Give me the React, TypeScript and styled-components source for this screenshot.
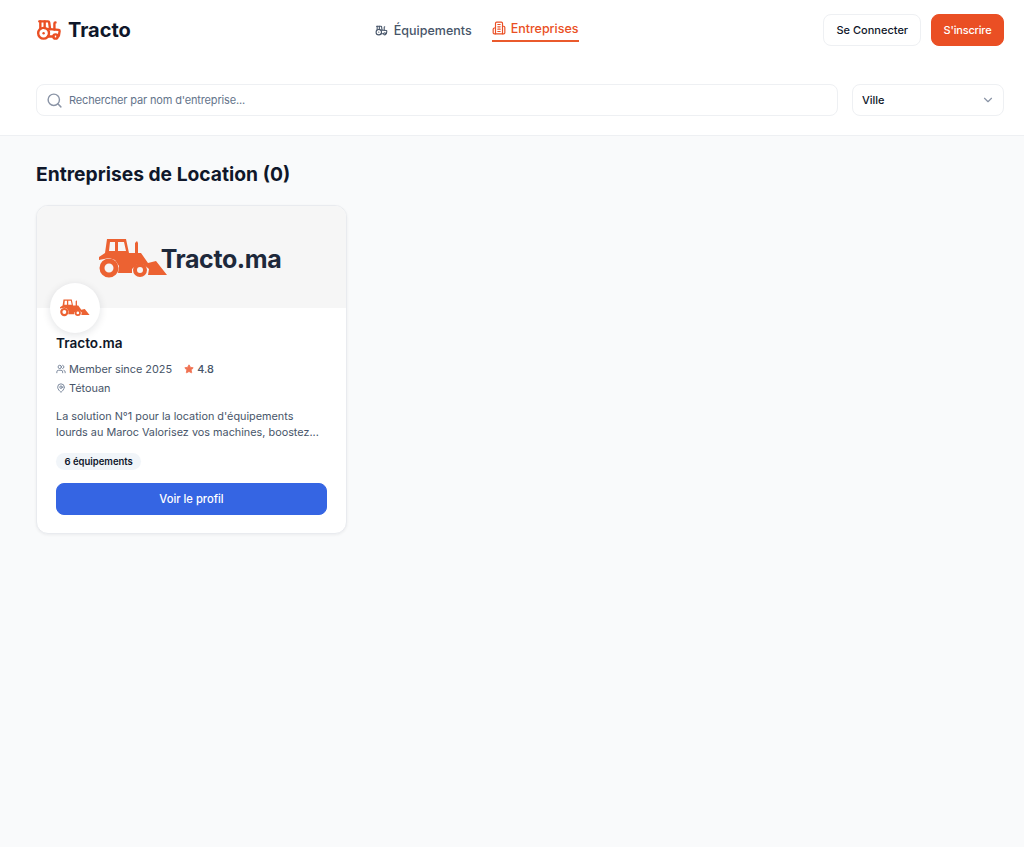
import { FC } from "react";
import styled, { createGlobalStyle } from "styled-components";
import { ChevronDown, MapPin, Search, Star, Tractor, Users } from "lucide-react";

const GlobalStyle = createGlobalStyle`
  html, body {
    margin: 0;
    padding: 0;
    background: #f9fafb;
    font-family: "Inter", "Liberation Sans", sans-serif;
    color: #0f172a;
  }
  * { box-sizing: border-box; }
`;

const Page = styled.div`
  min-height: 847px;
  background: #f9fafb;
`;

const TopArea = styled.header`
  background: #fff;
  border-bottom: 1px solid #eef0f3;
  height: 136px;
  padding: 14px 20px 0 36px;
`;

const NavRow = styled.div`
  display: flex;
  justify-content: space-between;
  align-items: center;
  height: 32px;
`;

const Brand = styled.div`
  display: flex;
  align-items: center;
  gap: 6px;
  font-size: 20px;
  font-weight: 700;
  color: #0f172a;
  svg { color: #ea4f24; }
`;

const Nav = styled.nav`
  display: flex;
  gap: 20px;
  margin-left: -1px;
`;

const NavItem = styled.a<{ $active?: boolean }>`
  display: flex;
  align-items: center;
  gap: ${(p) => (p.$active ? "5px" : "6px")};
  height: 27px;
  margin-top: ${(p) => (p.$active ? "0" : "3px")};
  padding-top: ${(p) => (p.$active ? "1px" : "0")};
  font-size: 12.5px;
  font-weight: 500;
  color: ${(p) => (p.$active ? "#ea4f24" : "#475569")};
  border-bottom: 2px solid ${(p) => (p.$active ? "#ea5a2c" : "transparent")};
`;

const Actions = styled.div`
  display: flex;
  gap: 10px;
`;

const HeaderButton = styled.button<{ $primary?: boolean }>`
  height: 32px;
  padding: 0 ${(p) => (p.$primary ? "11.5px" : "12px")};
  border-radius: 8px;
  border: 1px solid ${(p) => (p.$primary ? "#ea4f24" : "#eef0f3")};
  background: ${(p) => (p.$primary ? "#ea4f24" : "#fff")};
  color: ${(p) => (p.$primary ? "#fff" : "#0f172a")};
  font: 500 11px "Inter", sans-serif;
  letter-spacing: ${(p) => (p.$primary ? "-0.2px" : "0")};
`;

const FilterRow = styled.div`
  display: flex;
  gap: 14px;
  margin-top: 38px;
`;

const SearchBox = styled.div`
  flex: 1;
  height: 32px;
  display: flex;
  align-items: center;
  gap: 6px;
  padding: 0 9px;
  border: 1px solid #eef0f3;
  border-radius: 8px;
  font-size: 11px;
  letter-spacing: -0.15px;
  color: #64748b;
  svg { color: #8a94a6; }
`;

const CitySelect = styled.div`
  width: 152px;
  height: 32px;
  display: flex;
  align-items: center;
  justify-content: space-between;
  padding: 0 8px 0 9px;
  border: 1px solid #eef0f3;
  border-radius: 8px;
  font-size: 11px;
  font-weight: 500;
  color: #0f172a;
  svg { color: #8a94a6; }
`;

const Main = styled.main`
  padding: 26px 36px;
`;

const Title = styled.h1`
  margin: 0 0 19px;
  font-size: 19.25px;
  line-height: 24px;
  font-weight: 700;
  color: #0f172a;
`;

const Card = styled.article`
  position: relative;
  width: 311px;
  height: 329px;
  background: #fff;
  border: 1px solid #e9ebef;
  border-radius: 12px;
  box-shadow: 0 1px 3px rgba(15, 23, 42, 0.06);
  overflow: hidden;
`;

const Banner = styled.div`
  height: 102px;
  background: #f6f6f6;
  display: flex;
  align-items: center;
  justify-content: center;
  padding: 2px 3px 0 0;
`;

const BannerName = styled.span`
  font-size: 25px;
  font-weight: 700;
  letter-spacing: -0.4px;
  color: #1e293b;
  margin-left: -7px;
  margin-top: 1px;
`;

const Avatar = styled.div`
  position: absolute;
  left: 13px;
  top: 77px;
  width: 50px;
  height: 50px;
  border-radius: 50%;
  background: #fff;
  box-shadow: 0 2px 8px rgba(15, 23, 42, 0.12);
  display: flex;
  align-items: center;
  justify-content: center;
`;

const CardBody = styled.div`
  padding: 27px 19px 0;
`;

const CardName = styled.h2`
  margin: 0 0 7px;
  font-size: 13.6px;
  line-height: 17px;
  font-weight: 600;
  color: #0f172a;
`;

const MetaRow = styled.div`
  display: flex;
  align-items: center;
  height: 19px;
  font-size: 10.9px;
  color: #475569;
`;

const MetaIcon = styled.span`
  display: inline-flex;
  margin-right: 3px;
  color: #64748b;
`;

const Rating = styled.span`
  display: inline-flex;
  align-items: center;
  gap: 3px;
  margin-left: 12px;
  font-weight: 500;
  svg { color: #f07252; fill: #f07252; }
`;

const Description = styled.p`
  margin: 11px 0 0;
  font-size: 10.85px;
  line-height: 16px;
  color: #475569;
`;

const Badge = styled.span`
  display: inline-block;
  margin-top: 13px;
  padding: 0 8.5px;
  height: 17px;
  line-height: 17px;
  border-radius: 9px;
  background: #f1f5f9;
  font-size: 9.5px;
  font-weight: 600;
  color: #0f172a;
`;

const ProfileButton = styled.button`
  display: block;
  width: 100%;
  height: 32px;
  margin-top: 13px;
  border: 1px solid #3565e3;
  border-radius: 8px;
  background: #3565e3;
  color: #fff;
  font: 500 11.2px "Inter", sans-serif;
`;

const TractorLogo: FC<{ width: number }> = ({ width }) => (
  <svg width={width} viewBox="0 0 69 40" fill="#ec6232" aria-hidden="true">
    <path
      fillRule="evenodd"
      d="M8 1H27L30 15H36V5L38 3L39 5V15H42L49 25L57 23L68 37H49L50 31L44 26H38L33 31V35H19L20 28L16 22L10 20L0 22V19L6 15ZM11 4L10 13H16V4ZM19 4V13H27L25 4Z"
    />
    <path fillRule="evenodd" d="M0.5 30a9.5 9.5 0 1 0 19 0a9.5 9.5 0 1 0 -19 0ZM5.5 30a4.5 4.5 0 1 1 9 0a4.5 4.5 0 1 1 -9 0Z" />
    <path fillRule="evenodd" d="M34 32a7 7 0 1 0 14 0a7 7 0 1 0 -14 0ZM38 32a3 3 0 1 1 6 0a3 3 0 1 1 -6 0Z" />
  </svg>
);

const BuildingIcon: FC = () => (
  <svg width="14" height="14" viewBox="0 0 24 24" fill="none" stroke="currentColor" strokeWidth="2" strokeLinecap="round" strokeLinejoin="round" aria-hidden="true">
    <path d="M6 22V4a2 2 0 0 1 2-2h8a2 2 0 0 1 2 2v18Z" />
    <path d="M6 12H4a2 2 0 0 0-2 2v6a2 2 0 0 0 2 2h2" />
    <path d="M18 9h2a2 2 0 0 1 2 2v9a2 2 0 0 1-2 2h-2" />
    <path d="M10 6h4" />
    <path d="M10 10h4" />
    <path d="M10 14h4" />
    <path d="M10 18h4" />
  </svg>
);

const App: FC = () => (
  <>
    <GlobalStyle />
    <Page>
      <TopArea>
        <NavRow>
          <Brand>
            <Tractor size={26} strokeWidth={2.2} />
            Tracto
          </Brand>
          <Nav>
            <NavItem>
              <Tractor size={13} />
              Équipements
            </NavItem>
            <NavItem $active>
              <BuildingIcon />
              Entreprises
            </NavItem>
          </Nav>
          <Actions>
            <HeaderButton>Se Connecter</HeaderButton>
            <HeaderButton $primary>S'inscrire</HeaderButton>
          </Actions>
        </NavRow>
        <FilterRow>
          <SearchBox>
            <Search size={17} />
            Rechercher par nom d'entreprise...
          </SearchBox>
          <CitySelect>
            Ville
            <ChevronDown size={14} />
          </CitySelect>
        </FilterRow>
      </TopArea>
      <Main>
        <Title>Entreprises de Location (0)</Title>
        <Card>
          <Banner>
            <TractorLogo width={69} />
            <BannerName>Tracto.ma</BannerName>
          </Banner>
          <Avatar>
            <TractorLogo width={30} />
          </Avatar>
          <CardBody>
            <CardName>Tracto.ma</CardName>
            <MetaRow>
              <MetaIcon>
                <Users size={10} />
              </MetaIcon>
              Member since 2025
              <Rating>
                <Star size={10} />
                4.8
              </Rating>
            </MetaRow>
            <MetaRow>
              <MetaIcon>
                <MapPin size={10} />
              </MetaIcon>
              Tétouan
            </MetaRow>
            <Description>
              La solution N°1 pour la location d'équipements lourds au Maroc Valorisez vos machines, boostez...
            </Description>
            <Badge>6 équipements</Badge>
            <ProfileButton>Voir le profil</ProfileButton>
          </CardBody>
        </Card>
      </Main>
    </Page>
  </>
);

export default App;
